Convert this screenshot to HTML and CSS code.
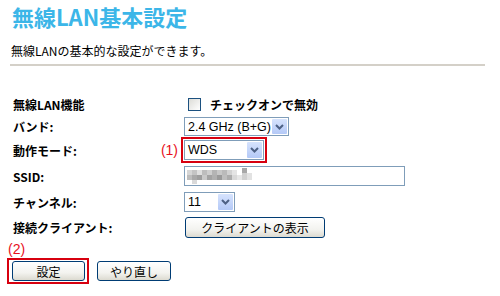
FILE: index.html
```html
<!DOCTYPE html>
<html lang="ja">
<head>
    <meta charset="UTF-8">
    <title>無線LAN基本設定</title>
    <link rel="stylesheet" href="styles.css">
</head>
<body>
    <h1 class="title">無線LAN基本設定</h1>
    <p class="intro">無線LANの基本的な設定ができます。</p>
    <div class="divider"></div>

    <form class="settings">
        <div class="label">無線LAN機能</div>
        <div class="field">
            <label class="check"><span class="check-box"></span>チェックオンで無効</label>
        </div>

        <div class="label">バンド:</div>
        <div class="field">
            <div class="select select-band">
                <span class="select-text">2.4 GHz (B+G)</span>
                <span class="select-arrow"><svg width="9" height="6" viewBox="0 0 9 6"><path d="M1 1 L4.5 4.5 L8 1" fill="none" stroke="#4d6185" stroke-width="2"/></svg></span>
            </div>
        </div>

        <div class="label label-note">動作モード:<span class="note">(1)</span></div>
        <div class="field">
            <div class="mark mark-mode">
                <div class="select select-mode">
                    <span class="select-text">WDS</span>
                    <span class="select-arrow"><svg width="9" height="6" viewBox="0 0 9 6"><path d="M1 1 L4.5 4.5 L8 1" fill="none" stroke="#4d6185" stroke-width="2"/></svg></span>
                </div>
            </div>
        </div>

        <div class="label">SSID:</div>
        <div class="field">
            <div class="text-input">
                <!-- ssid is blurred in the screenshot -->
                <svg class="blur" width="66" height="18" viewBox="0 0 66 18">
                    <rect x="0" y="3" width="5" height="5" fill="#d6d6d6"/>
                    <rect x="5" y="3" width="5" height="5" fill="#c4c4c4"/>
                    <rect x="10" y="3" width="5" height="5" fill="#e0e0e0"/>
                    <rect x="15" y="3" width="5" height="5" fill="#bdbdbd"/>
                    <rect x="20" y="3" width="5" height="5" fill="#cfcfcf"/>
                    <rect x="25" y="3" width="5" height="5" fill="#b4b4b4"/>
                    <rect x="30" y="3" width="5" height="5" fill="#c8c8c8"/>
                    <rect x="35" y="3" width="5" height="5" fill="#bababa"/>
                    <rect x="40" y="3" width="5" height="5" fill="#d2d2d2"/>
                    <rect x="45" y="3" width="5" height="5" fill="#e4e4e4"/>
                    <rect x="55" y="1" width="5" height="5" fill="#a8a8a8"/>
                    <rect x="0" y="8" width="5" height="5" fill="#bdbdbd"/>
                    <rect x="5" y="8" width="5" height="5" fill="#a9a9a9"/>
                    <rect x="10" y="8" width="5" height="5" fill="#9e9e9e"/>
                    <rect x="15" y="8" width="5" height="5" fill="#c9c9c9"/>
                    <rect x="20" y="8" width="5" height="5" fill="#a3a3a3"/>
                    <rect x="25" y="8" width="5" height="5" fill="#b0b0b0"/>
                    <rect x="30" y="8" width="5" height="5" fill="#9a9a9a"/>
                    <rect x="35" y="8" width="5" height="5" fill="#bebebe"/>
                    <rect x="40" y="8" width="5" height="5" fill="#acacac"/>
                    <rect x="45" y="8" width="5" height="5" fill="#d8d8d8"/>
                    <rect x="50" y="8" width="5" height="5" fill="#e6e6e6"/>
                    <rect x="55" y="6" width="5" height="7" fill="#d0d0d0"/>
                    <rect x="60" y="6" width="5" height="7" fill="#e2e2e2"/>
                    <rect x="5" y="13" width="5" height="4" fill="#d9d9d9"/>
                </svg>
            </div>
        </div>

        <div class="label">チャンネル:</div>
        <div class="field">
            <div class="select select-channel">
                <span class="select-text">11</span>
                <span class="select-arrow"><svg width="9" height="6" viewBox="0 0 9 6"><path d="M1 1 L4.5 4.5 L8 1" fill="none" stroke="#4d6185" stroke-width="2"/></svg></span>
            </div>
        </div>

        <div class="label">接続クライアント:</div>
        <div class="field">
            <button type="button" class="btn btn-clients">クライアントの表示</button>
        </div>
    </form>

    <div class="note note-submit">(2)</div>
    <div class="actions">
        <div class="mark mark-submit">
            <button type="submit" class="btn btn-small">設定</button>
        </div>
        <button type="reset" class="btn btn-small btn-reset">やり直し</button>
    </div>
</body>
</html>
```

FILE: styles.css
```css
body {
    margin: 0;
    font-family: "Noto Sans CJK JP", "Liberation Sans", sans-serif;
    font-size: 12px;
    color: #000;
    background-color: #fff;
}

.title {
    margin: 0;
    padding-left: 12px;
    font-size: 22px;
    line-height: 32px;
    font-weight: bold;
    color: #3cb6e8;
}

.intro {
    margin: 11px 0 0 11px;
    font-size: 12px;
    line-height: 16px;
}

.divider {
    height: 2px;
    margin: 5px 15px 0 10px;
    background-color: #d4d0c8;
}

.settings {
    display: grid;
    grid-template-columns: 171px 1fr;
    grid-template-rows: 24px 21px 26px 26px 26px 25px;
    margin-top: 26px;
    padding-left: 13px;
}

.label {
    display: flex;
    align-items: center;
    font-weight: bold;
    font-size: 12px;
}

.label-note {
    justify-content: space-between;
    padding-right: 6px;
}

.field {
    display: flex;
    align-items: center;
}

.note {
    font-family: "Liberation Sans", sans-serif;
    font-weight: normal;
    font-size: 14px;
    color: #e8101c;
}

.check {
    display: flex;
    align-items: center;
    font-weight: bold;
    font-size: 12px;
    padding-left: 4px;
}

.check-box {
    width: 11px;
    height: 11px;
    margin-right: 9px;
    border: 1px solid #1c5180;
    background: linear-gradient(135deg, #dcdcd7, #fff);
}

.select {
    display: flex;
    align-items: stretch;
    height: 20px;
    box-sizing: border-box;
    border: 1px solid #7f9db9;
    background-color: #fff;
    font-family: "Liberation Sans", sans-serif;
    font-size: 12.5px;
    white-space: nowrap;
}

.select-text {
    flex: 1;
    display: flex;
    align-items: center;
    padding-left: 3px;
}

.select-arrow {
    display: flex;
    align-items: center;
    justify-content: center;
    width: 15px;
    margin: 1px;
    border-radius: 1px;
    background: linear-gradient(#d6e3fd, #b4c9f7);
}

.select-band {
    width: 105px;
    height: 19px;
}

.select-mode {
    width: 80px;
}

.select-channel {
    width: 51px;
}

.mark {
    border: 2px solid #d7000f;
    padding: 1px;
}

.mark-mode {
    margin-left: -3px;
}

.text-input {
    display: flex;
    align-items: center;
    width: 221px;
    height: 20px;
    box-sizing: border-box;
    border: 1px solid #7f9db9;
    padding-left: 2px;
}

.btn {
    height: 21px;
    box-sizing: border-box;
    padding: 0;
    border: 1px solid #003c74;
    border-radius: 3px;
    background: linear-gradient(#fff, #f3f3ef 60%, #dcdad0);
    font-family: "Noto Sans CJK JP", sans-serif;
    font-size: 12px;
    line-height: 17px;
    color: #000;
}

.btn-clients {
    width: 140px;
    margin-left: 1px;
}

.note-submit {
    margin: 0 0 0 8px;
    line-height: 18px;
}

.actions {
    display: flex;
    align-items: center;
    gap: 8px;
    padding-left: 7px;
}

.mark-submit {
    padding: 1px 2px 1px 3px;
}

.btn-small {
    width: 73px;
    height: 20px;
}

.btn-reset {
    width: 74px;
}
```
